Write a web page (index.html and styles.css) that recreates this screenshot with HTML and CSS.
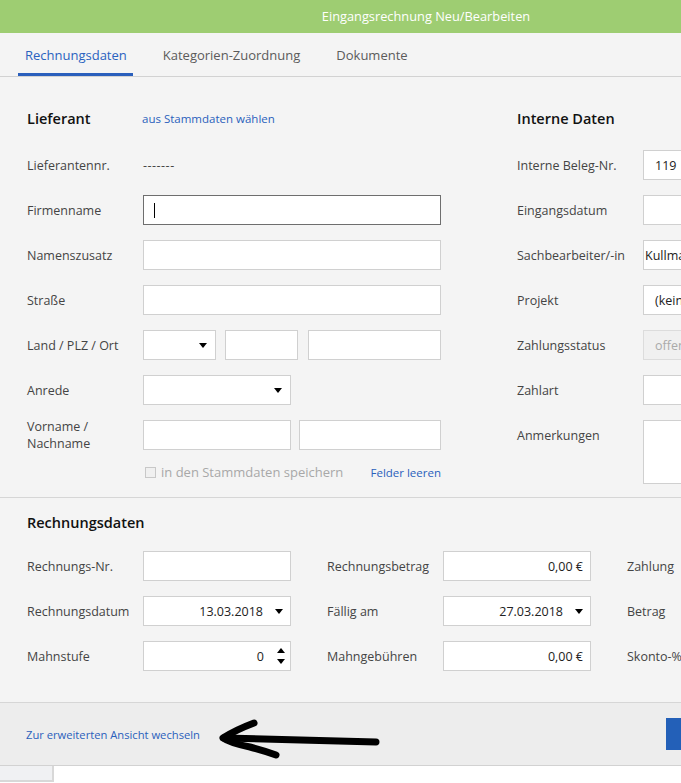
FILE: index.html
```html
<!DOCTYPE html>
<html lang="de">

<head>
  <meta charset="UTF-8">
  <meta name="viewport" content="width=device-width, initial-scale=1.0">
  <title>Eingangsrechnung Neu/Bearbeiten</title>
  <link rel="stylesheet" href="styles.css">
</head>

<body>
  <div class="dialog">
    <!-- Titelleiste -->
    <header class="title-bar">Eingangsrechnung Neu/Bearbeiten</header>

    <!-- Reiter -->
    <nav class="tabs">
      <a class="tab active">Rechnungsdaten</a>
      <a class="tab">Kategorien-Zuordnung</a>
      <a class="tab">Dokumente</a>
    </nav>

    <!-- Lieferant + Interne Daten -->
    <section class="panel panel-top">
      <div class="col col-left">
        <div class="row head">
          <h2>Lieferant</h2>
          <a class="link">aus Stammdaten wählen</a>
        </div>
        <div class="row first">
          <span class="label">Lieferantennr.</span>
          <span class="plain">-------</span>
        </div>
        <div class="row">
          <span class="label">Firmenname</span>
          <div class="field focus w-full"><span class="caret"></span></div>
        </div>
        <div class="row">
          <span class="label">Namenszusatz</span>
          <div class="field w-full"></div>
        </div>
        <div class="row">
          <span class="label">Straße</span>
          <div class="field w-full"></div>
        </div>
        <div class="row">
          <span class="label">Land / PLZ / Ort</span>
          <div class="fields">
            <div class="field select w-land"><i class="arrow"></i></div>
            <div class="field w-plz"></div>
            <div class="field w-ort"></div>
          </div>
        </div>
        <div class="row">
          <span class="label">Anrede</span>
          <div class="field select w-half"><i class="arrow"></i></div>
        </div>
        <div class="row">
          <span class="label">Vorname /<br>Nachname</span>
          <div class="fields gap-8">
            <div class="field w-half"></div>
            <div class="field w-rest"></div>
          </div>
        </div>
        <div class="row check-row">
          <span class="label"></span>
          <div class="check-line">
            <span class="checkbox"></span>
            <span class="check-text">in den Stammdaten speichern</span>
            <a class="link small-link">Felder leeren</a>
          </div>
        </div>
      </div>

      <div class="col col-right">
        <div class="row head">
          <h2>Interne Daten</h2>
        </div>
        <div class="row first">
          <span class="label">Interne Beleg-Nr.</span>
          <div class="field wide text">119</div>
        </div>
        <div class="row">
          <span class="label">Eingangsdatum</span>
          <div class="field wide"></div>
        </div>
        <div class="row">
          <span class="label">Sachbearbeiter/-in</span>
          <div class="field wide text tight">Kullmann</div>
        </div>
        <div class="row">
          <span class="label">Projekt</span>
          <div class="field wide text">(keines)</div>
        </div>
        <div class="row">
          <span class="label">Zahlungsstatus</span>
          <div class="field wide text disabled">offen</div>
        </div>
        <div class="row">
          <span class="label">Zahlart</span>
          <div class="field wide"></div>
        </div>
        <div class="row area-row">
          <span class="label">Anmerkungen</span>
          <div class="field wide area"></div>
        </div>
      </div>
    </section>

    <!-- Rechnungsdaten -->
    <section class="panel panel-bottom">
      <h2>Rechnungsdaten</h2>
      <div class="invoice-grid">
        <span class="label">Rechnungs-Nr.</span>
        <div class="field"></div>
        <span></span>
        <span class="label">Rechnungsbetrag</span>
        <div class="field text num">0,00 €</div>
        <span></span>
        <span class="label">Zahlung</span>

        <span class="label">Rechnungsdatum</span>
        <div class="field text num date">13.03.2018<i class="arrow"></i></div>
        <span></span>
        <span class="label">Fällig am</span>
        <div class="field text num date">27.03.2018<i class="arrow"></i></div>
        <span></span>
        <span class="label">Betrag</span>

        <span class="label">Mahnstufe</span>
        <div class="field text num date">0<span class="spin"><i class="arrow up"></i><i class="arrow"></i></span></div>
        <span></span>
        <span class="label">Mahngebühren</span>
        <div class="field text num">0,00 €</div>
        <span></span>
        <span class="label">Skonto-%</span>
      </div>
    </section>

    <!-- Fußleiste -->
    <footer class="footer">
      <a class="link footer-link">Zur erweiterten Ansicht wechseln</a>
      <svg class="pointer" width="166" height="44" viewBox="0 0 166 44">
        <path d="M36 6 C28 9 16 14 5 21 C12 26 22 28 32 30 C40 32 50 35 58 38" fill="none" stroke="#000" stroke-width="7" stroke-linecap="round" stroke-linejoin="round"/>
        <path d="M6 21 C50 22 110 24 158 25" fill="none" stroke="#000" stroke-width="7" stroke-linecap="round"/>
      </svg>
      <button class="btn-primary">Speichern</button>
    </footer>

    <div class="below">
      <div class="below-side"></div>
      <div class="below-main"></div>
    </div>
  </div>
</body>

</html>
```

FILE: styles.css
```css
html,
body {
  margin: 0;
  overflow: hidden;
  background: #fff;
}

.dialog {
  width: 852px;
  font-family: "Open Sans", "Noto Sans", sans-serif;
  font-size: 12.5px;
  color: #444;
  background: #f4f4f4;
}

.title-bar {
  height: 33px;
  line-height: 33px;
  background: #9ecd72;
  color: #fff;
  text-align: center;
  font-size: 12.8px;
}

/* Reiter */
.tabs {
  display: flex;
  gap: 23px;
  height: 43px;
  padding-left: 18px;
  border-bottom: 1px solid #d2d2d2;
}

.tab {
  display: flex;
  align-items: center;
  padding: 3px 6px 0 7px;
  color: #5b5b5b;
  font-size: 13px;
  border-bottom: 3px solid transparent;
}

.tab.active {
  color: #2a62c0;
  border-bottom-color: #2a5fbc;
}

/* Panels */
.panel {
  border-bottom: 1px solid #d6d6d6;
  padding-left: 27px;
}

.panel-top {
  display: flex;
  align-items: flex-start;
  gap: 76px;
  padding-top: 26px;
  padding-bottom: 13px;
}

.col-left {
  width: 414px;
}

.col-right {
  flex: 1;
}

.row {
  display: flex;
  align-items: center;
  height: 30px;
  margin-top: 15px;
}

.row.head {
  margin-top: 0;
}

.row.first {
  margin-top: 17px;
}

h2 {
  margin: 0;
  font-size: 14.5px;
  font-weight: 600;
  color: #111;
}

.head h2 {
  width: 115px;
}

.link {
  color: #2a5fbc;
  font-size: 11.5px;
  cursor: pointer;
}

.label {
  width: 116px;
  flex-shrink: 0;
  line-height: 17px;
}

.col-right .label {
  width: 126px;
}

.plain {
  color: #444;
  letter-spacing: 0.5px;
}

/* Eingabefelder */
.field {
  box-sizing: border-box;
  height: 30px;
  background: #fff;
  border: 1px solid #d0d0d0;
  display: flex;
  align-items: center;
  position: relative;
}

.field.focus {
  border-color: #6e6e6e;
}

.caret {
  width: 1px;
  height: 15px;
  margin-left: 10px;
  background: #000;
}

.fields {
  display: flex;
  gap: 9px;
}

.fields.gap-8 {
  gap: 8px;
}

.w-full { width: 298px; }
.w-land { width: 73px; }
.w-plz { width: 73px; margin-right: 1px; }
.w-ort { width: 133px; }
.w-half { width: 148px; }
.w-rest { width: 142px; }
.wide { width: 200px; }

.text {
  padding-left: 11px;
  color: #222;
}

.text.tight {
  padding-left: 1px;
}

.field.disabled {
  background: #f0f0f0;
  border-color: #dcdcdc;
  color: #aaa;
}

.area-row {
  height: 64px;
  align-items: flex-start;
}

.area-row .label {
  padding-top: 7px;
}

.field.area {
  height: 64px;
}

.select {
  justify-content: flex-end;
  padding-right: 4px;
}

.arrow {
  display: block;
  width: 0;
  height: 0;
  margin: 0 4px;
  border-left: 4.5px solid transparent;
  border-right: 4.5px solid transparent;
  border-top: 5px solid #000;
}

.arrow.up {
  border-top: 0;
  border-bottom: 5px solid #000;
  margin-bottom: 6px;
}

/* Checkbox-Zeile */
.check-row {
  height: 20px;
  margin-top: 12px;
}

.check-line {
  display: flex;
  align-items: center;
  width: 298px;
}

.checkbox {
  box-sizing: border-box;
  width: 11px;
  height: 11px;
  margin: 0 5px 0 2px;
  border: 1px solid #c8c8c8;
  background: #f0f0f0;
}

.check-text {
  color: #a8a8a8;
  font-size: 13px;
}

.small-link {
  margin-left: auto;
}

/* Rechnungsdaten */
.panel-bottom {
  padding-top: 15px;
  padding-bottom: 31px;
}

.panel-bottom h2 {
  height: 20px;
  line-height: 20px;
}

.invoice-grid {
  display: grid;
  grid-template-columns: 116px 148px 36px 116px 148px 36px auto;
  grid-auto-rows: 30px;
  row-gap: 15px;
  align-items: center;
  margin-top: 18px;
}

.invoice-grid .field {
  width: 148px;
}

.num {
  justify-content: flex-end;
  padding-right: 7px;
}

.date {
  padding-right: 2px;
}

.date .arrow {
  margin: 0 5px 0 12px;
}

.spin {
  display: flex;
  flex-direction: column;
  margin-left: 13px;
}

.spin .arrow {
  margin: 0 3px 0 0;
}

.spin .arrow.up {
  margin-bottom: 6px;
}

/* Fußleiste */
.footer {
  display: flex;
  align-items: center;
  height: 62px;
  padding-left: 26px;
  background: #ededed;
  border-bottom: 1px solid #d2d2d2;
}

.footer-link {
  font-size: 11.2px;
}

.pointer {
  margin: 10px 0 0 18px;
}

.btn-primary {
  margin-left: auto;
  margin-right: 36px;
  width: 150px;
  height: 32px;
  border: none;
  background: #2360b8;
  color: #fff;
  font-family: inherit;
}

.below {
  display: flex;
  height: 40px;
  background: #fff;
}

.below-side {
  width: 52px;
  height: 14px;
  background: #f0f1f3;
  border-right: 2px solid #d8d8d8;
  border-bottom: 2px solid #d8d8d8;
}

.below-main {
  flex: 1;
}
```
